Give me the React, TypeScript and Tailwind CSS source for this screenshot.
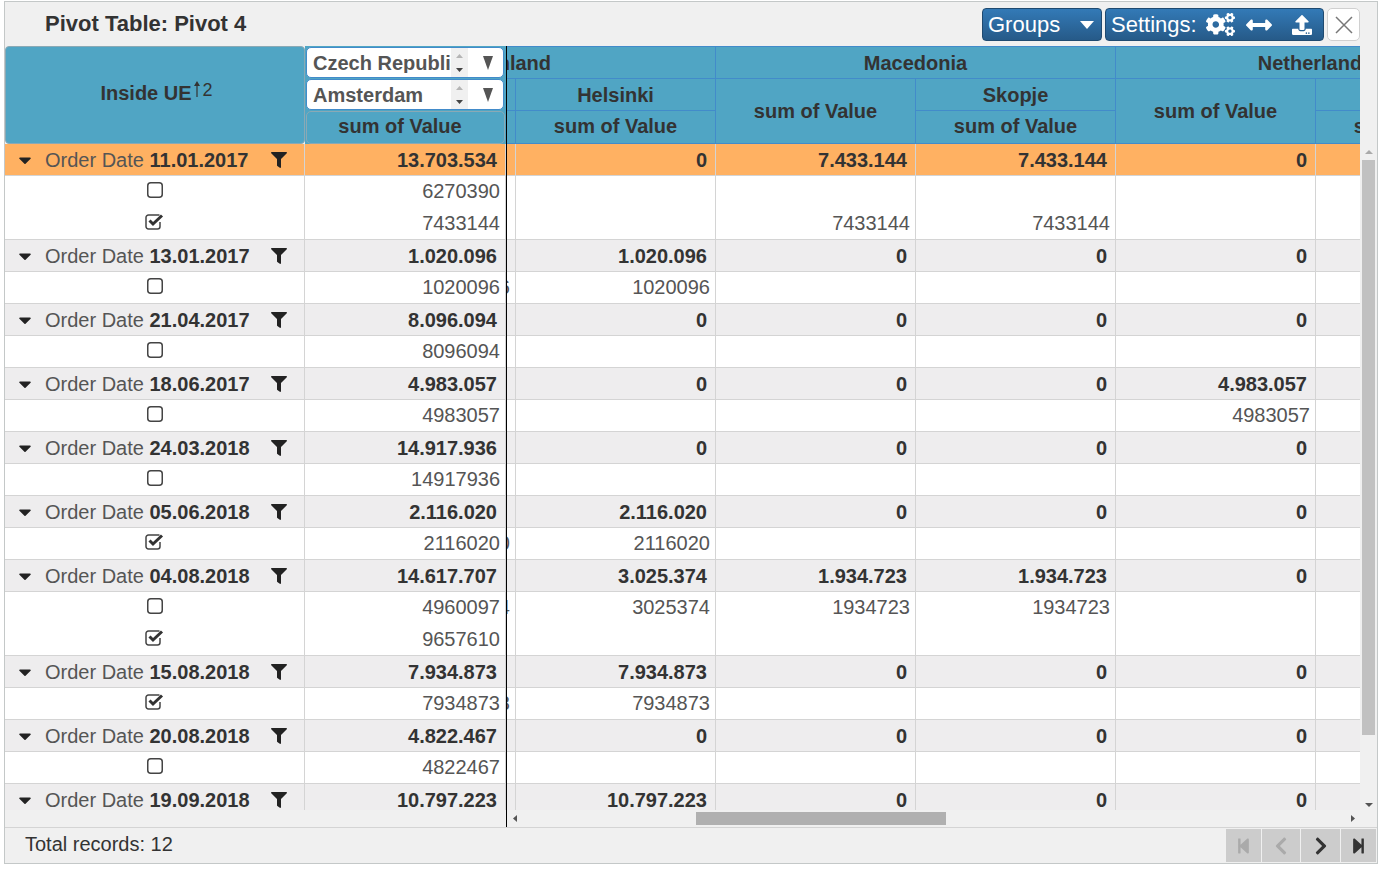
import {
  FaArrowsAltH,
  FaCaretDown,
  FaChevronLeft,
  FaChevronRight,
  FaCogs,
  FaFilter,
  FaStepBackward,
  FaStepForward,
  FaUpload,
} from "react-icons/fa";

interface Child {
  checked: boolean;
  total: string;
  values: string[];
}

interface Group {
  date: string;
  total: string;
  values: string[];
  children: Child[];
  active?: boolean;
}

const groups: Group[] = [
  {
    date: "11.01.2017",
    total: "13.703.534",
    values: ["", "0", "7.433.144", "7.433.144", "0", ""],
    active: true,
    children: [
      { checked: false, total: "6270390", values: ["", "", "", "", "", ""] },
      { checked: true, total: "7433144", values: ["", "", "7433144", "7433144", "", ""] },
    ],
  },
  {
    date: "13.01.2017",
    total: "1.020.096",
    values: ["", "1.020.096", "0", "0", "0", ""],
    children: [{ checked: false, total: "1020096", values: ["1020096", "1020096", "", "", "", ""] }],
  },
  {
    date: "21.04.2017",
    total: "8.096.094",
    values: ["", "0", "0", "0", "0", ""],
    children: [{ checked: false, total: "8096094", values: ["", "", "", "", "", ""] }],
  },
  {
    date: "18.06.2017",
    total: "4.983.057",
    values: ["", "0", "0", "0", "4.983.057", ""],
    children: [{ checked: false, total: "4983057", values: ["", "", "", "", "4983057", ""] }],
  },
  {
    date: "24.03.2018",
    total: "14.917.936",
    values: ["", "0", "0", "0", "0", ""],
    children: [{ checked: false, total: "14917936", values: ["", "", "", "", "", ""] }],
  },
  {
    date: "05.06.2018",
    total: "2.116.020",
    values: ["", "2.116.020", "0", "0", "0", ""],
    children: [{ checked: true, total: "2116020", values: ["2116020", "2116020", "", "", "", ""] }],
  },
  {
    date: "04.08.2018",
    total: "14.617.707",
    values: ["", "3.025.374", "1.934.723", "1.934.723", "0", ""],
    children: [
      { checked: false, total: "4960097", values: ["3025374", "3025374", "1934723", "1934723", "", ""] },
      { checked: true, total: "9657610", values: ["", "", "", "", "", ""] },
    ],
  },
  {
    date: "15.08.2018",
    total: "7.934.873",
    values: ["", "7.934.873", "0", "0", "0", ""],
    children: [{ checked: true, total: "7934873", values: ["7934873", "7934873", "", "", "", ""] }],
  },
  {
    date: "20.08.2018",
    total: "4.822.467",
    values: ["", "0", "0", "0", "0", ""],
    children: [{ checked: false, total: "4822467", values: ["", "", "", "", "", ""] }],
  },
  {
    date: "19.09.2018",
    total: "10.797.223",
    values: ["", "10.797.223", "0", "0", "0", ""],
    children: [],
  },
];

const headCell =
  "flex items-center justify-center whitespace-nowrap border-r border-b border-[#428bca]";

function CheckIcon({ checked }: { checked: boolean }) {
  if (!checked) {
    return (
      <svg width="16" height="16" viewBox="0 0 16 16" fill="none" stroke="#444" strokeWidth="1.5">
        <rect x="0.75" y="0.75" width="14.5" height="14.5" rx="3" />
      </svg>
    );
  }
  return (
    <svg className="mb-[2px]" width="20" height="18" viewBox="0 0 20 18" fill="none" stroke="#444">
      <path d="M14.5 3H3.5a2.5 2.5 0 0 0-2.5 2.5v9A2.5 2.5 0 0 0 3.5 17h9a2.5 2.5 0 0 0 2.5-2.5V10" strokeWidth="1.5" />
      <path d="M4.5 8.5 8 12l9-8.5" stroke="#333" strokeWidth="3" />
    </svg>
  );
}

function Spinner() {
  return (
    <div className="flex h-full w-[17px] shrink-0 flex-col items-center justify-center gap-[10px] bg-[#f0f0f0]">
      <svg width="7" height="4" viewBox="0 0 7 4">
        <path d="M3.5 0 7 4H0z" fill="#b5b5b5" />
      </svg>
      <svg width="7" height="4" viewBox="0 0 7 4">
        <path d="M0 0h7L3.5 4z" fill="#444" />
      </svg>
    </div>
  );
}

function HeaderFilter({ label }: { label: string }) {
  return (
    <div className="flex h-[31px] w-[198px] items-center overflow-hidden rounded-[5px] border border-[#428bca] bg-white pl-[6px] text-[#555]">
      <span className="w-[138px] shrink-0 overflow-hidden whitespace-nowrap">{label}</span>
      <Spinner />
      <div className="flex flex-1 justify-center pl-[5px]">
        <svg width="10" height="14" viewBox="0 0 10 14">
          <path d="M0 0h10L5 14z" fill="#555" />
        </svg>
      </div>
    </div>
  );
}

function LeftHeader() {
  return (
    <div className="flex h-[98px] font-bold">
      <div className="flex w-[300px] items-center justify-center rounded-[4px] border border-[#8aa9b5] bg-[#50a5c4] pb-[5px] pl-[3px]">
        <span>Inside UE</span>
        <span className="mb-[5px] ml-[2px] flex items-center gap-[3px] text-[18px] font-normal leading-none">
          <svg className="mb-[2px]" width="6" height="16" viewBox="0 0 6 16" fill="#333">
            <path d="M3 0 6 5H3.6v11H2.4V5H0z" />
          </svg>
          2
        </span>
      </div>
      <div className="flex w-[201px] flex-col bg-[#50a5c4] pl-[1px] pt-[1px]">
        <HeaderFilter label="Czech Republic" />
        <div className="mt-[1px]">
          <HeaderFilter label="Amsterdam" />
        </div>
        <div className="mt-[1px] flex h-[33px] w-[199px] items-center justify-center rounded-[5px] border border-[#8aa9b5] pb-[3px] pr-[11px]">
          sum of Value
        </div>
      </div>
    </div>
  );
}

function RightHeader() {
  return (
    <div className="ml-[-191px] grid h-[98px] w-[1200px] grid-cols-[repeat(6,200px)] grid-rows-[33px_32px_33px] bg-[#50a5c4] font-bold">
      <div className={`${headCell} col-span-2 border-t`}>Finland</div>
      <div className={`${headCell} col-span-2 border-t`}>Macedonia</div>
      <div className={`${headCell} col-span-2 border-t`}>Netherlands</div>
      <div className={headCell}></div>
      <div className={headCell}>Helsinki</div>
      <div className={`${headCell} row-span-2`}>sum of Value</div>
      <div className={headCell}>Skopje</div>
      <div className={`${headCell} row-span-2`}>sum of Value</div>
      <div className={headCell}></div>
      <div className={headCell}></div>
      <div className={`${headCell} pb-[3px]`}>sum of Value</div>
      <div className={`${headCell} pb-[3px]`}>sum of Value</div>
      <div className={`${headCell} pb-[3px]`}>sum of Value</div>
    </div>
  );
}

function LeftRows() {
  return (
    <div>
      {groups.map((group) => (
        <div key={group.date}>
          <div
            className={`flex h-[32px] border-b border-[#d4d4d4] ${group.active ? "bg-[#ffb162]" : "bg-[#eeedee]"}`}
          >
            <div className="flex w-[300px] items-center border-r border-[#d4d4d4] pl-[13px]">
              <FaCaretDown className="mr-[13px] h-[20px] w-[14px] text-[#222]" />
              <span className="whitespace-nowrap text-[#555]">
                Order Date <b className="text-[#333]">{group.date}</b>
              </span>
              <FaFilter className="ml-auto mr-[17px] h-[16px] w-[16px] text-[#222]" />
            </div>
            <div className="flex w-[201px] items-center justify-end border-r border-[#d4d4d4] pr-[8px] font-bold">
              {group.total}
            </div>
          </div>
          {group.children.map((child, i) => {
            const isLast = i === group.children.length - 1;
            return (
              <div key={i} className={`flex h-[32px] bg-white ${isLast ? "border-b border-[#d4d4d4]" : ""}`}>
                <div
                  className={`flex w-[300px] items-center justify-center border-r border-[#d4d4d4] ${isLast ? "pb-[3px]" : "pb-[5px]"}`}
                >
                  <CheckIcon checked={child.checked} />
                </div>
                <div className="flex w-[201px] items-center justify-end border-r border-[#d4d4d4] pb-[2px] pr-[5px] text-[#555]">
                  {child.total}
                </div>
              </div>
            );
          })}
        </div>
      ))}
    </div>
  );
}

function RightRows() {
  return (
    <div className="ml-[-191px] w-[1200px]">
      {groups.map((group) => (
        <div key={group.date}>
          <div
            className={`grid h-[32px] grid-cols-[repeat(6,200px)] border-b border-[#d4d4d4] font-bold ${group.active ? "bg-[#ffb162]" : "bg-[#eeedee]"}`}
          >
            {group.values.map((value, i) => (
              <div key={i} className="flex items-center justify-end border-r border-[#d4d4d4] pr-[8px]">
                {value}
              </div>
            ))}
          </div>
          {group.children.map((child, r) => (
            <div
              key={r}
              className={`grid h-[32px] grid-cols-[repeat(6,200px)] bg-white text-[#555] ${r === group.children.length - 1 ? "border-b border-[#d4d4d4]" : ""}`}
            >
              {child.values.map((value, i) => (
                <div key={i} className="flex items-center justify-end border-r border-[#d4d4d4] pb-[2px] pr-[5px]">
                  {value}
                </div>
              ))}
            </div>
          ))}
        </div>
      ))}
    </div>
  );
}

function ToolbarButton({ className, children }: { className: string; children: React.ReactNode }) {
  return (
    <button
      className={`flex h-[33px] items-center rounded-[4px] border border-[#1f4a70] bg-gradient-to-b from-[#337ab7] to-[#265a88] text-[22px] text-white ${className}`}
    >
      {children}
    </button>
  );
}

function PagerButton({ className, children }: { className: string; children: React.ReactNode }) {
  return <div className={`flex h-[33px] items-center justify-center bg-[#cccccc] ${className}`}>{children}</div>;
}

export default function App() {
  return (
    <div className="min-h-[870px] bg-white pl-[4px] pt-[1px] font-['Liberation_Sans',Arial,sans-serif] text-[20px] leading-none text-[#333]">
      <div className="flex h-[863px] w-[1374px] flex-col border border-[#c4c8c8] bg-[#f0f0f0]">
        {/* title bar */}
        <div className="flex h-[44px] shrink-0 items-center pl-[40px] pr-[17px] pt-[1px]">
          <span className="mb-[2px] text-[22px] font-bold">Pivot Table: Pivot 4</span>
          <div className="ml-auto flex gap-[3px]">
            <ToolbarButton className="w-[120px] pl-[5px]">
              Groups
              <svg className="ml-[20px]" width="14" height="8" viewBox="0 0 14 8">
                <path d="M0 0h14L7 8z" fill="#fff" />
              </svg>
            </ToolbarButton>
            <ToolbarButton className="w-[219px] pl-[5px]">
              Settings:
              <FaCogs className="ml-[9px] h-[29px] w-[29px]" />
              <FaArrowsAltH className="ml-[11px] h-[26px] w-[26px]" />
              <FaUpload className="ml-[20px] h-[20px] w-[20px]" />
            </ToolbarButton>
            <button className="flex h-[33px] w-[33px] items-center justify-center rounded-[5px] border border-[#d0d0d0] bg-white">
              <svg width="20" height="20" viewBox="0 0 20 20" stroke="#777" strokeWidth="1.5">
                <path d="M2 2 18 18M18 2 2 18" />
              </svg>
            </button>
          </div>
        </div>

        {/* grid */}
        <div className="flex min-h-0 flex-1">
          <div className="flex w-[1355px] flex-col">
            <div className="flex h-[764px] overflow-hidden">
              <div className="w-[502px] shrink-0 border-r border-black">
                <LeftHeader />
                <LeftRows />
              </div>
              <div className="min-w-0 flex-1 overflow-hidden">
                <RightHeader />
                <RightRows />
              </div>
            </div>
            <div className="flex h-[17px] shrink-0">
              <div className="w-[502px] shrink-0 border-r border-black" />
              <div className="flex flex-1 items-center pl-[6px] pr-[5px]">
                <svg width="4" height="7" viewBox="0 0 4 7">
                  <path d="M4 0v7L0 3.5z" fill="#555" />
                </svg>
                <div className="ml-[179px] h-[13px] w-[250px] bg-[#b0b0b0]" />
                <svg className="ml-auto" width="4" height="7" viewBox="0 0 4 7">
                  <path d="M0 0v7l4-3.5z" fill="#555" />
                </svg>
              </div>
            </div>
          </div>
          <div className="flex h-[764px] w-[17px] shrink-0 flex-col items-center pt-[104px]">
            <svg width="8" height="4" viewBox="0 0 8 4">
              <path d="M4 0l4 4H0z" fill="#aaa" />
            </svg>
            <div className="mt-[6px] h-[575px] w-[13px] bg-[#c1c1c1]" />
            <svg className="mb-[3px] mt-auto" width="8" height="4" viewBox="0 0 8 4">
              <path d="M0 0h8L4 4z" fill="#555" />
            </svg>
          </div>
        </div>

        {/* footer */}
        <div className="flex h-[36px] shrink-0 items-center border-t border-[#d4d4d4] pl-[20px] pr-[1px]">
          <span className="mb-[3px]">Total records: 12</span>
          <div className="ml-auto flex gap-[1px]">
            <PagerButton className="w-[35px]">
              <FaStepBackward className="h-[18px] w-[15px] text-[#aaa]" />
            </PagerButton>
            <PagerButton className="w-[38px]">
              <FaChevronLeft className="h-[20px] w-[16px] text-[#aaa]" />
            </PagerButton>
            <PagerButton className="w-[39px]">
              <FaChevronRight className="h-[20px] w-[16px] text-[#333]" />
            </PagerButton>
            <PagerButton className="w-[35px]">
              <FaStepForward className="h-[18px] w-[15px] text-[#333]" />
            </PagerButton>
          </div>
        </div>
      </div>
    </div>
  );
}
